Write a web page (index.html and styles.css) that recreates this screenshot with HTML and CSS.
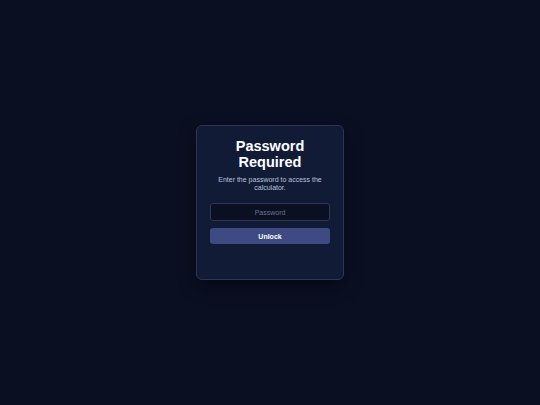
FILE: index.html
```html
<!DOCTYPE html>
<html>
<head>
<meta charset="utf-8">
<link rel="stylesheet" href="styles.css">
</head>
<body>
<div class="screen">
  <div class="card">
    <h1 class="title">Password Required</h1>
    <p class="subtitle">Enter the password to access the calculator.</p>
    <input class="field" type="password" placeholder="Password">
    <button class="unlock">Unlock</button>
  </div>
</div>
</body>
</html>
```
FILE: styles.css
```css
html, body {
  margin: 0;
  padding: 0;
  background: #0a0f22;
  font-family: "Liberation Sans", Arial, sans-serif;
}
.screen {
  height: 405px;
  display: flex;
  align-items: center;
  justify-content: center;
}
.card {
  box-sizing: border-box;
  width: 148px;
  height: 155px;
  padding: 12px 13px 14px;
  background: #121b36;
  border: 1px solid #2b3657;
  border-radius: 6px;
  box-shadow: 0 6px 18px rgba(0, 0, 0, 0.45);
  display: flex;
  flex-direction: column;
  align-items: stretch;
}
.title {
  margin: 0;
  color: #ffffff;
  font-size: 14.5px;
  line-height: 16px;
  font-weight: bold;
  text-align: center;
}
.subtitle {
  margin: 6px 0 0;
  color: #b8c1da;
  font-size: 7px;
  line-height: 8px;
  text-align: center;
}
.field {
  box-sizing: border-box;
  margin: 11px 0 0;
  height: 18px;
  width: 100%;
  padding: 0 6px;
  background: #0a0f22;
  border: 1px solid #2b3759;
  border-radius: 3px;
  color: #ffffff;
  font-family: "Liberation Sans", Arial, sans-serif;
  font-size: 7px;
  text-align: center;
  outline: none;
}
.field::placeholder {
  color: #6a7290;
}
.unlock {
  margin: 7px 0 0;
  height: 16px;
  width: 100%;
  padding: 0;
  background: #3e4b82;
  border: none;
  border-radius: 3px;
  color: #ffffff;
  font-family: "Liberation Sans", Arial, sans-serif;
  font-size: 7px;
  font-weight: bold;
}
```
